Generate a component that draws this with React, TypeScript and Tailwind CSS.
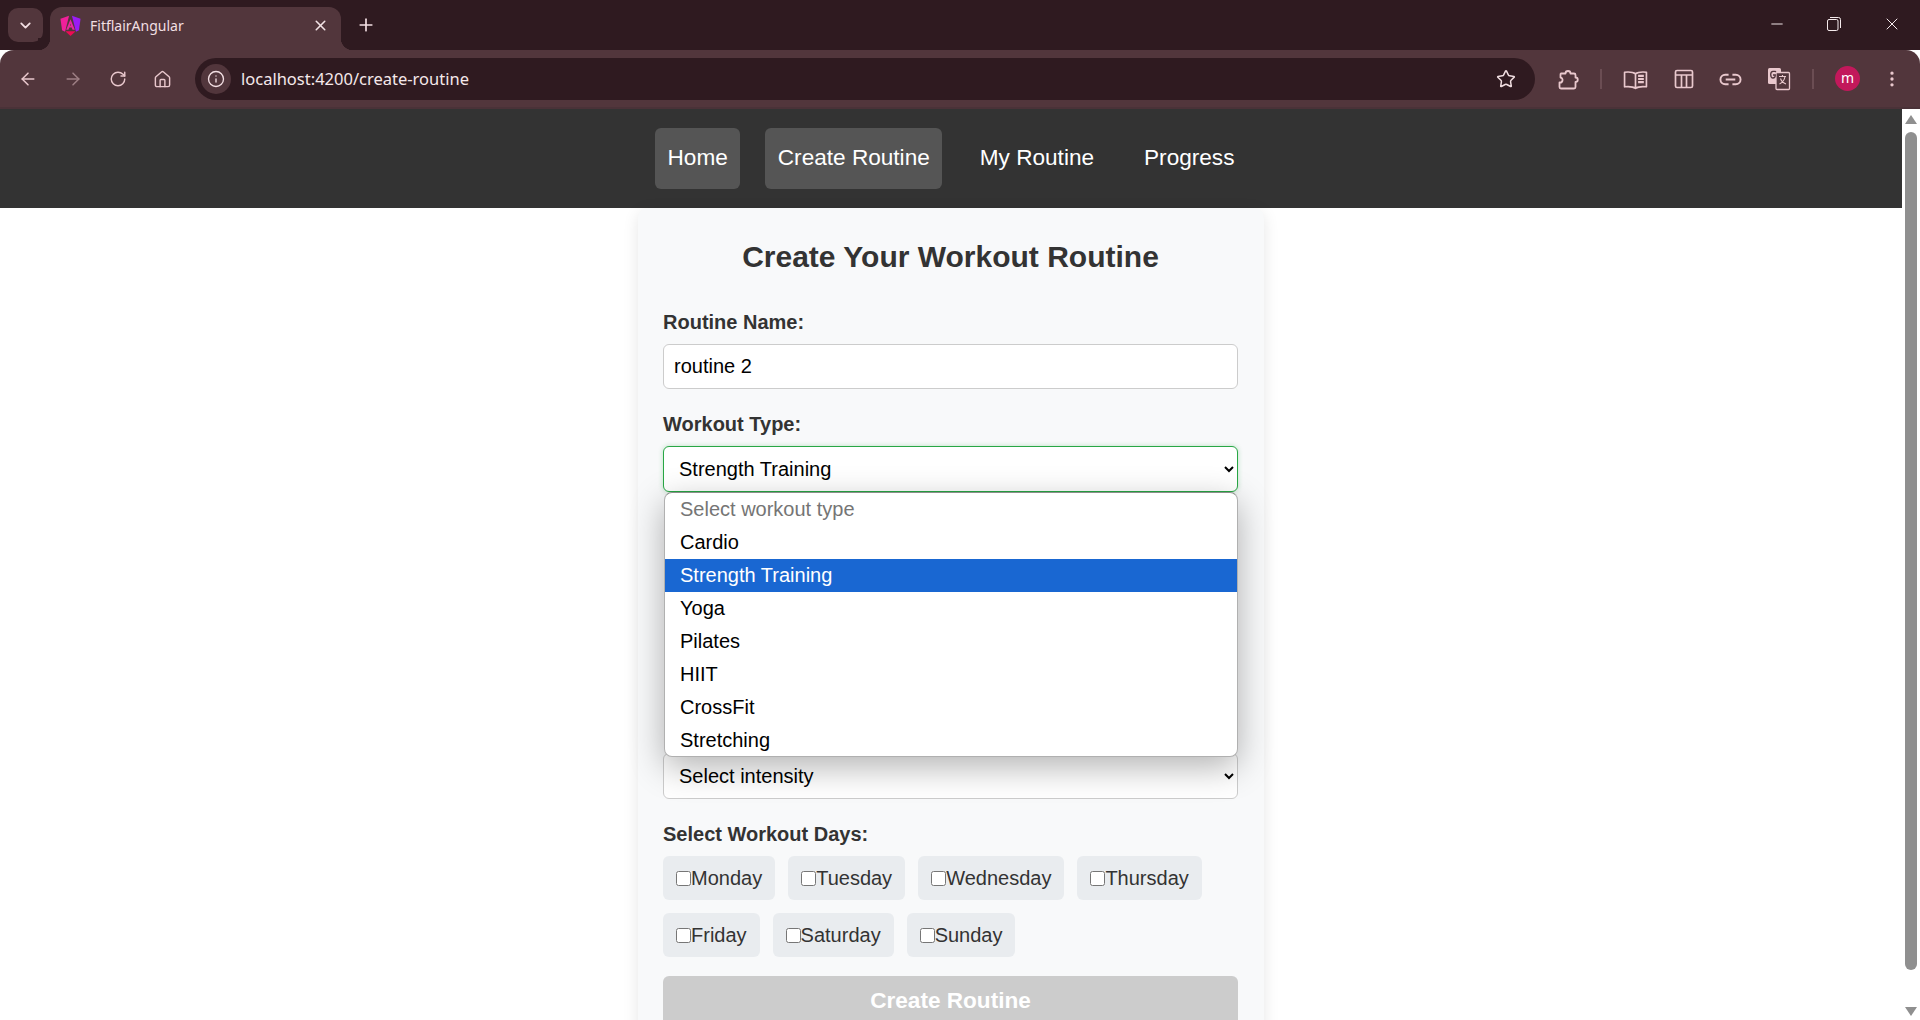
import React from "react";
import { ArrowLeft, ArrowRight, ChevronDown, Home, Info, Minus, MoreVertical, Plus, RotateCw, Star, X } from "lucide-react";

const iconColor = "text-[#e9c8cd]";

const AngularLogo = () => (
  <svg viewBox="0 0 24 24" className="h-[23px] w-[23px]">
    <path d="M10.500 1.800 1.500 5 3.200 17 6.300 18.500 10.500 1.800Z" fill="#f0209a" />
    <path d="M13.500 1.800 22.500 5 20.800 17 17.700 18.500 13.500 1.800Z" fill="#9a1cf5" />
    <path d="M12 5.500 7.500 16.500h2.300l1-2.500h2.400l1 2.500h2.300L12 5.500Zm-.6 6.500.6-1.800.6 1.800h-1.200Z" fill="#e9289f" />
    <path d="M7.500 18h9l.3.500L12 23l-4.800-4.500.3-.5Z" fill="#ee0a55" />
  </svg>
);

const PuzzleIcon = () => (
  <svg viewBox="0 0 24 24" className="h-[24px] w-[24px]" fill="none" stroke="currentColor" strokeWidth="1.800" strokeLinejoin="round">
    <path d="M5 21.500a1.500 1.500 0 0 1-1.500-1.500v-4.500a2.500 2.500 0 0 0 1-5V8A1.500 1.500 0 0 1 5 6.500h4.500a2.500 2.500 0 0 1 5 0H18A1.500 1.500 0 0 1 19.500 8v2.500a2.200 2.200 0 0 1 0 4.500V20a1.500 1.500 0 0 1-1.500 1.500H5Z" />
  </svg>
);

const ReaderIcon = () => (
  <svg viewBox="0 0 24 24" className="h-[25px] w-[25px]" fill="none" stroke="currentColor" strokeWidth="1.600" strokeLinejoin="round">
    <path d="M12 6.500C10 5 7 4.500 1.500 5v14C7 18.500 10 19 12 20.500c2-1.500 5-2 10.500-1.500V5C17 4.500 14 5 12 6.500ZM12 6.500v14" />
    <path d="M14.500 8.500h5.500M14.500 11.500h5.500M14.500 14.500h5.500" strokeWidth="2" />
  </svg>
);

const TableIcon = () => (
  <svg viewBox="0 0 20 20" className="h-[20px] w-[20px]" fill="none" stroke="currentColor" strokeWidth="1.700">
    <rect x="1.500" y="1.500" width="17" height="17" rx="1.500" />
    <path d="M1.500 6h17M7.500 6v12.500M12.500 6v12.500" />
  </svg>
);

const LinkIcon = () => (
  <svg viewBox="0 0 24 12" className="h-[13px] w-[23px]" fill="none" stroke="currentColor" strokeWidth="2">
    <path d="M10 1H6.500a5 5 0 0 0 0 10H10M14 1h3.500a5 5 0 0 1 0 10H14M7 6h10" />
  </svg>
);

const TranslateIcon = () => (
  <svg viewBox="0 0 24 24" className="h-[24px] w-[24px]" fill="none">
    <rect x="1" y="1" width="13" height="16" rx="1.500" fill="#e9c8cd" />
    <rect x="9" y="5.500" width="13.500" height="17" rx="1" stroke="#e9c8cd" strokeWidth="1.300" fill="#52363c" />
    <path d="M9 5 8.200 4.300H6C4.500 4.300 3.700 5.500 3.700 7.500S4.500 11 6 11c1.500 0 2.300-1 2.300-3H6" stroke="#52363c" strokeWidth="1.300" />
    <path d="M12 9.500h7M15.500 8v1.500M18 9.500c-.5 3.500-2.500 6-5.500 7.500M13.500 11.500c.8 2.500 2.800 4.500 5.500 5.500" stroke="#e9c8cd" strokeWidth="1.100" />
  </svg>
);

const RestoreIcon = () => (
  <svg viewBox="0 0 14 14" className="h-[14px] w-[14px]" fill="none" stroke="#f5eaec" strokeWidth="1">
    <rect x="0.500" y="2.500" width="10.500" height="11" rx="1.500" />
    <path d="M3 .5h8.500A2 2 0 0 1 13.500 2.500V11" />
  </svg>
);

const TabStrip = () => (
  <div className="flex h-[50px] shrink-0 bg-[#2f1a20]">
    <div className="ml-[8px] mt-[8px] flex h-[34px] w-[35px] items-center justify-center rounded-[10px] bg-[#52363c]">
      <ChevronDown size={17} strokeWidth={2.5} className="text-[#f3dfe3]" />
    </div>
    <div className="relative ml-[7px] mt-[7px] flex h-[43px] w-[291px] items-center rounded-t-[12px] bg-[#52363c] pb-[7px] pl-[9px] pr-[12px] before:absolute before:bottom-0 before:left-[-12px] before:h-[12px] before:w-[12px] before:bg-[radial-gradient(circle_at_0_0,#2f1a20_12px,#52363c_12.500px)] after:absolute after:bottom-0 after:right-[-12px] after:h-[12px] after:w-[12px] after:bg-[radial-gradient(circle_at_100%_0,#2f1a20_12px,#52363c_12.500px)]">
      <AngularLogo />
      <span className="ml-[8px] font-['Noto_Sans',sans-serif] text-[14px] text-[#f1dfe2]">FitflairAngular</span>
      <X size={17} strokeWidth={2.2} className="ml-auto text-[#f3e3e6]" />
    </div>
    <div className="ml-[15px] mt-[8px] flex h-[34px] w-[20px] items-center justify-center">
      <Plus size={20} strokeWidth={2} className="text-[#f3dfe3]" />
    </div>
    <div className="ml-auto mt-[10px] flex h-[28px] items-center pr-[18px]">
      <Minus size={18} strokeWidth={1.300} className="text-[#f5eaec]" />
      <div className="ml-[41px] flex w-[14px] justify-center">
        <RestoreIcon />
      </div>
      <X size={20} strokeWidth={1.200} className="ml-[41px] text-[#f5eaec]" />
    </div>
  </div>
);

const Slot = ({ children, className = "" }: { children: React.ReactNode; className?: string }) => (
  <div className={`flex h-[42px] w-[45px] shrink-0 items-center justify-center ${iconColor} ${className}`}>{children}</div>
);

const Toolbar = () => (
  <div className="flex h-[59px] shrink-0 items-start rounded-t-[14px] border-b-2 border-[#4a3238] bg-[#52363c] pl-[5px] pt-[8px]">
    <Slot>
      <ArrowLeft size={20} strokeWidth={1.8} />
    </Slot>
    <Slot className="opacity-50">
      <ArrowRight size={20} strokeWidth={1.8} />
    </Slot>
    <Slot>
      <RotateCw size={18} strokeWidth={1.9} />
    </Slot>
    <Slot>
      <Home size={19} strokeWidth={1.8} />
    </Slot>
    <div className="ml-[10px] flex h-[42px] w-[1340px] shrink-0 items-center rounded-full bg-[#2f1a20] pl-[6px] pr-[19px]">
      <div className="flex h-[30px] w-[30px] items-center justify-center rounded-full bg-[#52363c]">
        <Info size={18} strokeWidth={1.8} className="text-[#f3dfe3]" />
      </div>
      <span className="ml-[10px] pt-px font-['Noto_Sans',sans-serif] text-[16.500px] text-[#f5e8ea]">localhost:4200/create-routine</span>
      <Star size={20} strokeWidth={1.8} className="ml-auto text-[#f0dde0]" />
    </div>
    <Slot className="ml-[10px]">
      <PuzzleIcon />
    </Slot>
    <div className="ml-[10px] mt-[11px] h-[20px] w-[2px] bg-[#6b4d53]" />
    <Slot className="ml-[11px]">
      <ReaderIcon />
    </Slot>
    <Slot className="ml-[3px]">
      <TableIcon />
    </Slot>
    <Slot className="ml-[2px]">
      <LinkIcon />
    </Slot>
    <Slot className="ml-[3px]">
      <TranslateIcon />
    </Slot>
    <div className="ml-[11px] mt-[11px] h-[20px] w-[2px] bg-[#6b4d53]" />
    <div className="ml-[21px] mt-[8px] flex h-[25px] w-[25px] items-center justify-center rounded-full bg-[#c2185b] pb-[3px] font-['Noto_Sans',sans-serif] text-[14px] text-white">
      m
    </div>
    <Slot className="ml-[9px]">
      <MoreVertical size={20} strokeWidth={2} />
    </Slot>
  </div>
);

const links = [
  { label: "Home", active: true },
  { label: "Create Routine", active: true },
  { label: "My Routine", active: false },
  { label: "Progress", active: false },
];

const Nav = () => (
  <nav className="flex h-[99px] shrink-0 items-center justify-center gap-[25px] bg-[#333333]">
    {links.map((l) => (
      <a
        key={l.label}
        className={`flex h-[61px] items-center rounded-[6px] px-[12.500px] pb-[2px] text-[22.600px] text-white ${l.active ? "bg-[#555555]" : ""}`}
      >
        {l.label}
      </a>
    ))}
  </nav>
);

const workoutTypes = ["Select workout type", "Cardio", "Strength Training", "Yoga", "Pilates", "HIIT", "CrossFit", "Stretching"];
const field = "w-full rounded-[6px] border bg-white text-[20px] text-black";
const labelCls = "block text-[20px] leading-[23px] font-bold text-[#333333]";

const Popup = () => (
  <div className="absolute left-[1px] right-0 top-full z-10 h-[265px] overflow-hidden rounded-[8px] border border-[#b0b0b0] border-t-[#8a8f8a] bg-white shadow-[0_10px_34px_rgba(0,0,0,0.3)]">
    {workoutTypes.map((t, i) => (
      <div
        key={t}
        className={`flex h-[33px] items-center px-[15px] pb-[2px] text-[20px] ${i === 0 ? "text-[#757575]" : i === 2 ? "bg-[#1967d2] text-white" : "text-black"}`}
      >
        {t}
      </div>
    ))}
  </div>
);

const days = [
  ["Monday", "Tuesday", "Wednesday", "Thursday"],
  ["Friday", "Saturday", "Sunday"],
];

const Form = () => (
  <div className="mx-auto h-[900px] w-[626px] rounded-t-[10px] bg-[#f8f9fa] pl-[25px] pr-[26px] pt-[32px] shadow-[0_4px_16px_rgba(0,0,0,0.1)]">
    <h2 className="mb-[37px] text-center text-[30px] leading-[34px] font-bold text-[#333333]">Create Your Workout Routine</h2>

    <label className={`${labelCls} mb-[10px]`}>Routine Name:</label>
    <input defaultValue="routine 2" className={`${field} mb-[24px] block h-[45px] border-[#cccccc] px-[10px] outline-none`} />

    <label className={`${labelCls} mb-[10px]`}>Workout Type:</label>
    <div className="relative mb-[261px] h-[46px]">
      <select
        defaultValue="Strength Training"
        className={`${field} h-[46px] border-[#28a745] px-[11px] shadow-[0_0_5px_rgba(40,167,69,0.3)] outline-none`}
      >
        {workoutTypes.map((t) => (
          <option key={t}>{t}</option>
        ))}
      </select>
      <Popup />
    </div>

    <select className={`${field} mb-[24px] h-[46px] border-[#cccccc] px-[11px]`}>
      <option>Select intensity</option>
    </select>

    <label className={`${labelCls} mb-[10px]`}>Select Workout Days:</label>
    <div className="mb-[19px] flex flex-col gap-[13px]">
      {days.map((r, i) => (
        <div key={i} className="flex gap-[13px]">
          {r.map((d) => (
            <label key={d} className="flex h-[44px] items-center rounded-[6px] bg-[#e9ecef] px-[13px] text-[20px] text-[#333333]">
              <input type="checkbox" className="m-0 h-[15px] w-[15px]" />
              {d}
            </label>
          ))}
        </div>
      ))}
    </div>

    <button disabled className="h-[50px] w-full rounded-[6px] bg-[#cccccc] text-[22.600px] font-bold text-white">
      Create Routine
    </button>
  </div>
);

const Scrollbar = () => (
  <div className="flex w-[18px] shrink-0 flex-col items-center bg-white pr-px">
    <div className="mt-[6px] h-0 w-0 border-x-[6.500px] border-b-[9px] border-x-transparent border-b-[#8f8f8f]" />
    <div className="mt-[8px] h-[838px] w-[12px] rounded-full bg-[#8f8f8f]" />
    <div className="mb-[4px] mt-auto h-0 w-0 border-x-[6.500px] border-t-[9px] border-x-transparent border-t-[#8f8f8f]" />
  </div>
);

export default function App() {
  return (
    <div className="flex h-screen flex-col overflow-hidden bg-white font-['Liberation_Sans',Arial,sans-serif]">
      <TabStrip />
      <Toolbar />
      <div className="flex min-h-0 flex-1">
        <div className="min-w-0 flex-1 overflow-hidden">
          <Nav />
          <Form />
        </div>
        <Scrollbar />
      </div>
    </div>
  );
}
